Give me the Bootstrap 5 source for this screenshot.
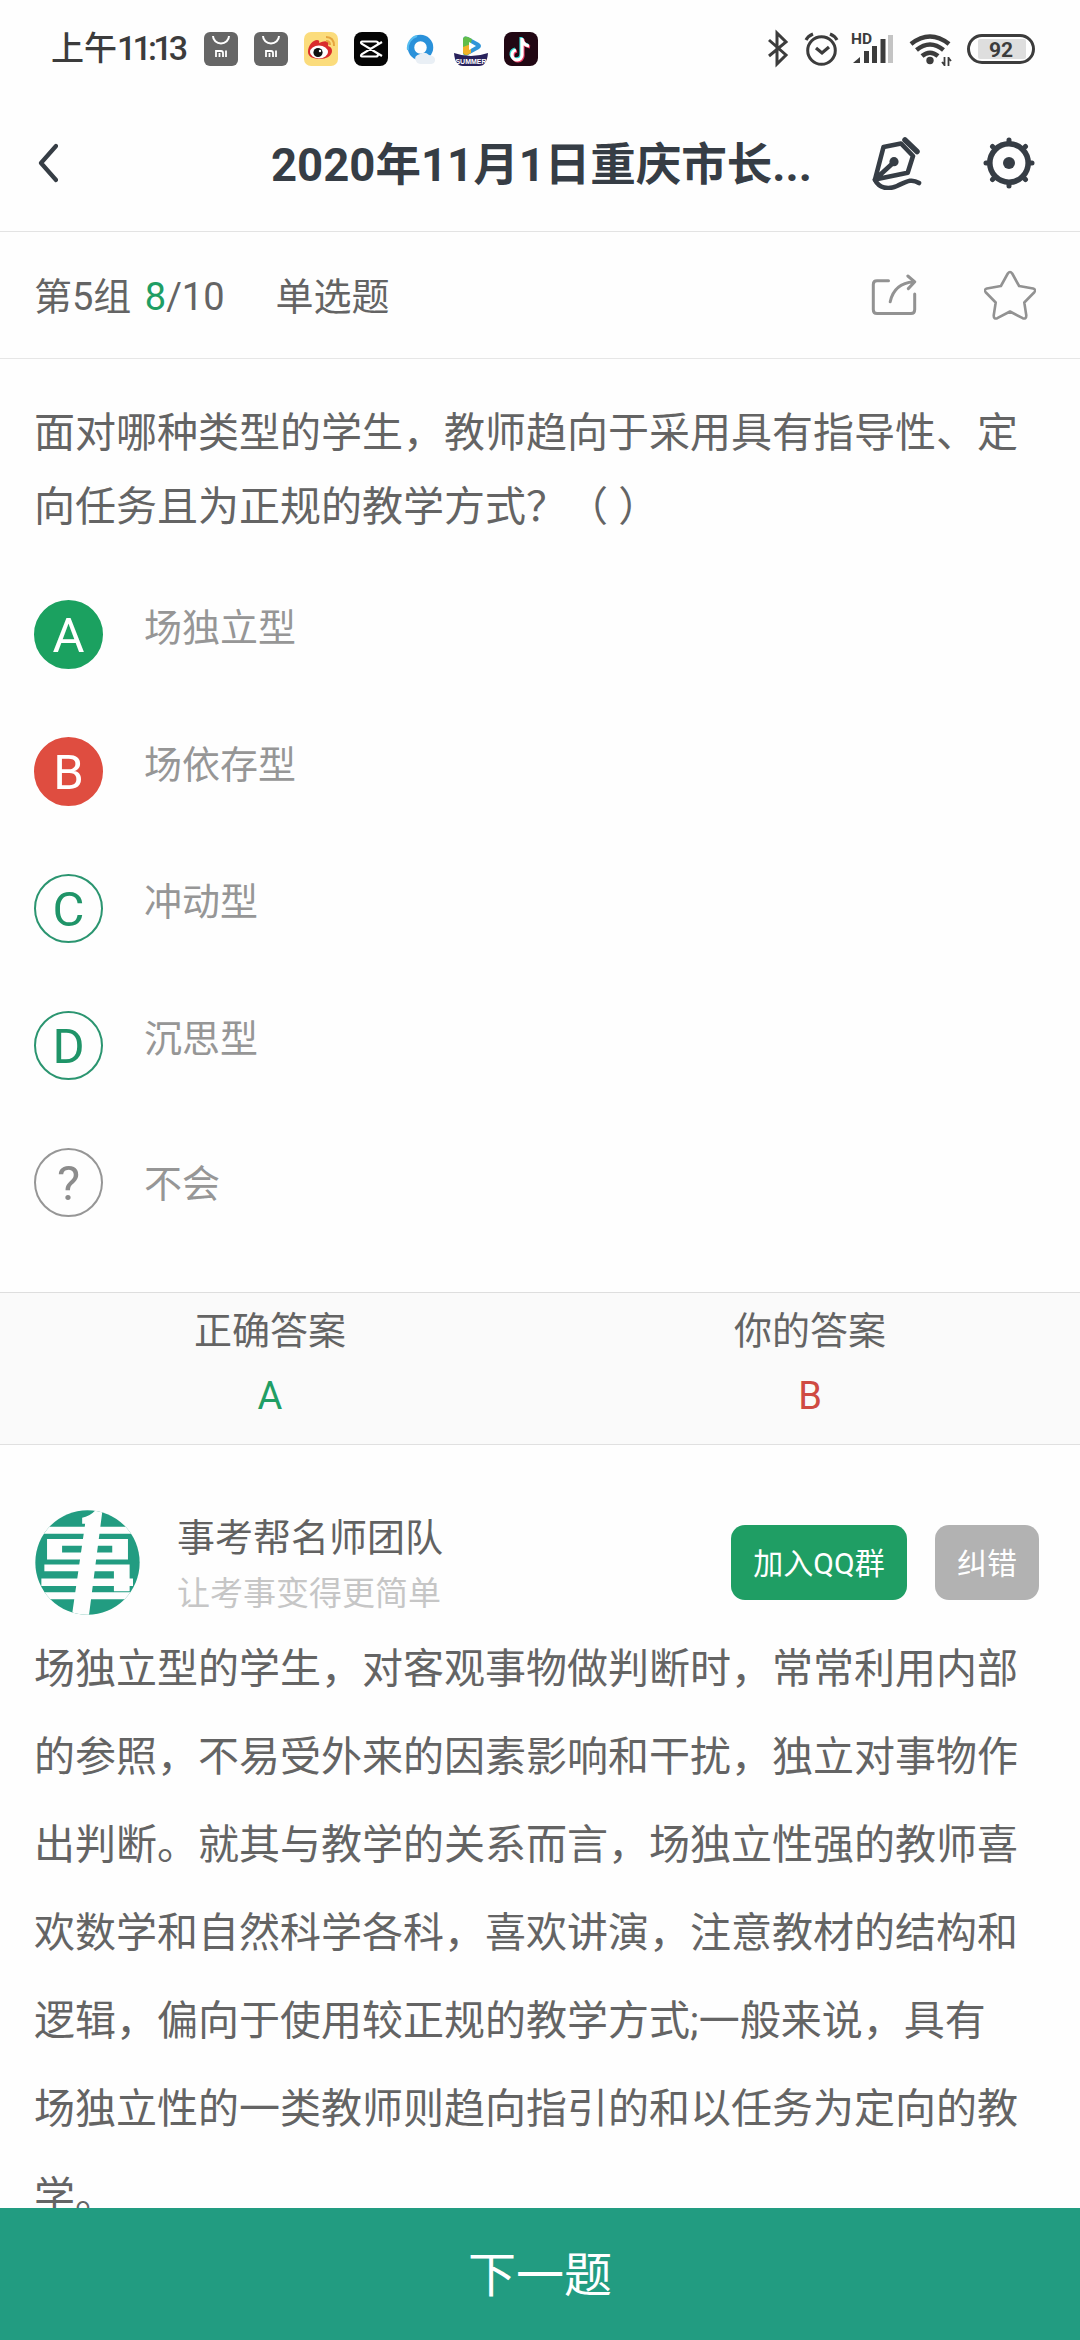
<!DOCTYPE html>
<html lang="zh-CN">
<head>
<meta charset="utf-8">
<meta name="viewport" content="width=device-width, initial-scale=1">
<title>单选题</title>
<link rel="stylesheet" href="https://cdn.jsdelivr.net/npm/bootstrap@5.3.0/dist/css/bootstrap.min.css">
<style>
body{font-family:Roboto,"Noto Sans CJK SC",sans-serif;color:#646464;background:#fefefe;width:1080px;height:2340px;font-size:38px;line-height:1.5;overflow:hidden;font-weight:400}
svg{display:block;flex:none}
.statusbar{height:97px;padding:0 44px 0 51px;color:#3c3c3c}
.clock{font-size:33px;font-weight:500;width:153px;white-space:nowrap}
.clock span{letter-spacing:-3.8px;font-size:34px}
.app-icons{gap:16px}
.titlebar{height:135px;padding:0 45px 3px 38px;border-bottom:1px solid #e3e3e3;color:#363d45}
.page-title{font-size:45.5px;font-weight:700;width:540px;margin-left:213px;white-space:nowrap;padding-top:7px}
.gear-icon{margin-left:61px}
.metabar{height:127px;padding:0 44px 0 34px;border-bottom:1px solid #e6e6e6;white-space:nowrap}
.meta-text{padding-top:5px}
.meta-count{margin-left:4px}
.meta-kind{margin-left:51px}
.star-icon{margin-left:65px}
.c-green{color:#1f9e64}
.c-red{color:#cf4a42}
.question{padding:37px 0 0 34px;font-size:41px;line-height:74px;height:241px;white-space:nowrap}
.choices{height:692px;padding-left:34px}
.choice{height:137px;gap:41px;color:#969696}
.choice span:last-child{line-height:56px}
.bullet{width:69px;height:69px;border:2px solid #2b9570;color:#1f9468;font-size:49px;line-height:67px;text-align:center;flex:none}
.bullet.right{background:#1ba160;border-color:#1ba160;color:#fff}
.bullet.wrong{background:#df4d40;border-color:#df4d40;color:#fff}
.bullet.unsure{border-color:#969696;color:#8c8c8c}
.answers{height:153px;border-top:1px solid #dedede;border-bottom:1px solid #e0e0e0;background:#fafafa;padding-top:6px}
.answers .col{line-height:65px}
.team{height:178px;padding:56px 41px 0 35px}
.team-name{margin-left:37px;line-height:56px;padding-top:7px;color:#626262;white-space:nowrap}
.team-sub{font-size:33px;color:#c6c6c6}
.pill{height:75px;border:0;border-radius:14px;font-size:30px;line-height:77px;padding:0;color:#fff;white-space:nowrap}
.pill-join{width:176px;background:#1f9e64}
.pill-fix{width:104px;background:#b2b2b2;margin-left:28px}
.explain{height:585px;overflow:hidden;padding:2px 0 0 34px;font-size:41px;line-height:88px;white-space:nowrap}
.next-btn{height:132px;border:0;border-radius:0;background:#229c81;color:#fff;font-size:48px;padding:10px 0 6px}
</style>
<script src="https://cdn.jsdelivr.net/npm/bootstrap@5.3.0/dist/js/bootstrap.bundle.min.js"></script>
</head>
<body class="d-flex flex-column m-0">
<div class="statusbar d-flex align-items-center flex-shrink-0">
  <div class="clock">上午<span>11:13</span></div>
  <div class="app-icons d-flex">
    <svg width="34" height="34" viewBox="0 0 34 34"><rect width="34" height="34" rx="6" fill="#666"/><path d="M9 4a8 7.5 0 0 0 16 0" fill="none" stroke="#fff" stroke-width="2"/><path d="M12 25v-6h5q2 0 2 2v4M15.500 25v-4M22 18.500V25" fill="none" stroke="#fff" stroke-width="1.800"/></svg>
    <svg width="34" height="34" viewBox="0 0 34 34"><rect width="34" height="34" rx="6" fill="#666"/><path d="M9 4a8 7.500 0 0 0 16 0" fill="none" stroke="#fff" stroke-width="2"/><path d="M12 25v-6h5q2 0 2 2v4M15.500 25v-4M22 18.500V25" fill="none" stroke="#fff" stroke-width="1.800"/></svg>
    <svg width="34" height="34" viewBox="0 0 34 34"><rect width="34" height="34" rx="7" fill="#fbdc7c"/><path d="M4 20C4 13 9 8 13 8q3 0 2 3 6-3 9-1 1 1 0 4 4 1 4 5c0 5-6 8-12 8S4 25 4 20z" fill="#d92b2c"/><ellipse cx="15" cy="20" rx="9" ry="6.500" fill="#fff"/><circle cx="14" cy="20.500" r="4.600" fill="#111"/><circle cx="16" cy="19" r="1.200" fill="#fff"/><path d="M22 5q8 0 8 9M22 9q4 0 4 4" fill="none" stroke="#e5a43e" stroke-width="2"/></svg>
    <svg width="34" height="34" viewBox="0 0 34 34"><rect width="34" height="34" rx="8" fill="#050505"/><path d="M28 10L8 22q-2 2 0 2.500h14q2 0 2-2M28 24L8 12q-2-2 0-2.500h14q2 0 2 2" fill="none" stroke="#fff" stroke-width="2.200"/></svg>
    <svg width="34" height="34" viewBox="0 0 34 34"><circle cx="16.500" cy="15.500" r="9.500" fill="none" stroke="#2a91da" stroke-width="6.500"/><path d="M4 18a12.500 12.500 0 0 1 9-14" fill="none" stroke="#56bdf0" stroke-width="2"/><path d="M12 29q-3-5 4-7 5-3 9 1 7 1 6 6-1 3-4 3H17q-4 0-5-3z" fill="#e9eff5"/></svg>
    <svg width="34" height="34" viewBox="0 0 34 34"><path d="M9 8q0-5 5-3l11 6q4 3 0 6l-11 6q-5 2-5-3z" fill="#3195d8"/><path d="M9 8q0-5 5-3l4 2-4 16q-5 1-5-3z" fill="#62bd49"/><path d="M9 15l8-3v9l-4 2q-4 0-4-3z" fill="#f3b229"/><path d="M15 10l7 4-7 4z" fill="#fff"/><path d="M0 21q17 6 34 0-1 13-9 13H9Q1 34 0 21z" fill="#28215b"/><text x="17" y="31.500" font-family="Liberation Sans,sans-serif" font-size="7" font-weight="700" fill="#fff" text-anchor="middle">SUMMER</text></svg>
    <svg width="34" height="34" viewBox="0 0 34 34"><rect width="34" height="34" rx="8" fill="#210713"/><g fill="none" stroke-width="3.200"><path d="M17 5v17a5 5 0 1 1-6-5M17 6q1 6 7 7" stroke="#34d9d4"/><path d="M19 7v17a5 5 0 1 1-6-5M19 8q1 6 7 7" stroke="#ee3d65"/><path d="M18 6v17a5 5 0 1 1-6-5M18 7q1 6 7 7" stroke="#fff"/></g></svg>
  </div>
  <svg class="ms-auto" width="272" height="40" viewBox="764 28 272 40" fill="none" stroke="#3c3c3c" stroke-width="3">
    <path d="M769 39l17 15-9 9V32l9 9-17 14" stroke-width="3"/>
    <circle cx="821.500" cy="49.500" r="13.800"/><path d="M816 47l6 5 7-6M806 39q2-4 7-6M830 33q5 2 7 6" stroke-width="3.200"/>
    <text x="851" y="43" stroke="none" fill="#3c3c3c" font-family="Roboto,sans-serif" font-weight="700" font-size="15.500">HD</text>
    <path d="M853 62l7-6v6z" fill="#3c3c3c" stroke="none"/><path d="M866.500 62V50M874.500 62V45M883 62V38" stroke-width="5"/><path d="M890.500 62V34" stroke="#c4c4c4" stroke-width="5"/>
    <path d="M911 43q19-15 38 0M916.500 49q13.500-11 27 0M922 55q8-6.500 16 0" stroke-width="4.600"/><circle cx="930" cy="59.500" r="3.700" fill="#3c3c3c" stroke="none"/><path d="M944.500 65v-9M942 61l2.500 3M948.500 56v9M951 60l-2.500-3" stroke-width="1.800"/>
    <rect x="978" y="38" width="48" height="20" rx="2" fill="#dedede" stroke="none"/><rect x="968.500" y="34.500" width="65" height="27" rx="13.500"/><text x="1001" y="55.500" text-anchor="middle" stroke="none" fill="#3c3c3c" font-family="Roboto,sans-serif" font-weight="700" font-size="21">92</text>
  </svg>
</div>
<header class="titlebar d-flex align-items-center flex-shrink-0">
  <svg width="20" height="40" viewBox="38 143 20 40" fill="none" stroke="currentColor" stroke-width="4.200" stroke-linecap="round" stroke-linejoin="round"><path d="M56 146L41 163l15 17"/></svg>
  <div class="page-title">2020年11月1日重庆市长...</div>
  <svg class="ms-auto" width="50" height="54" viewBox="871 136 50 54" fill="none" stroke="currentColor" stroke-width="4.600" stroke-linecap="round" stroke-linejoin="round"><path d="M904 140l12 11.500" stroke-width="5.500"/><path d="M874 179.500l8.500-32.500 17.500-3.500 12 12.500-5.300 16.700zL892 163"/><circle cx="893" cy="161.700" r="4.600" fill="currentColor" stroke="none"/><path d="M874 180c4 8 13 10 22 6s14-8 22-3"/></svg>
  <svg class="gear-icon" width="52" height="52" viewBox="982.500 137 52 52" fill="none" stroke="currentColor"><circle cx="1008.500" cy="163" r="19.200" stroke-width="5.600"/><circle cx="1008.500" cy="163" r="6" fill="currentColor" stroke="none"/><path d="M1008.500 140v3M1008.500 183v3M985.500 163h3M1028.500 163h3M992 146.500l2.500 2.500M1022.500 177l2.500 2.500M1025 146.500l-2.500 2.500M994.500 177l-2.500 2.500" stroke-width="5" stroke-linecap="round"/></svg>
</header>
<section class="metabar d-flex align-items-center flex-shrink-0">
  <div class="meta-text">第5组 <span class="c-green meta-count">8</span>/10</div>
  <div class="meta-text meta-kind">单选题</div>
  <svg class="ms-auto" width="48" height="50" viewBox="871 271 48 50" fill="none" stroke="#929292" stroke-width="3" stroke-linecap="round" stroke-linejoin="round"><path d="M888.500 281.700H877q-3.700 0-3.700 3.700v25q0 4 3.700 4h34q3.700 0 3.700-4V295M890.200 302.700q4-18.500 23.500-20M907.800 277l7 5.800-6.500 6.800"/></svg>
  <svg class="star-icon" width="52" height="50" viewBox="983.700 271 52 50" fill="none" stroke="#929292" stroke-width="2.600" stroke-linejoin="round"><path d="M1007.500 274.500q2.200-3 4.400 0l6.900 12.500 14 2.500q3.600 1.200 1 4l-9.800 10 2 13q0 4-3.600 2.700l-12.700-6.700-12.700 6.700q-3.600 1.300-3.600-2.700l2-13-9.800-10q-2.600-2.800 1-4l14-2.500z"/></svg>
</section>
<main class="flex-shrink-0">
  <div class="question">面对哪种类型的学生，教师趋向于采用具有指导性、定<br>向任务且为正规的教学方式？（ ）</div>
  <div class="choices">
    <div class="choice d-flex align-items-start"><span class="bullet right rounded-circle">A</span><span>场独立型</span></div>
    <div class="choice d-flex align-items-start"><span class="bullet wrong rounded-circle">B</span><span>场依存型</span></div>
    <div class="choice d-flex align-items-start"><span class="bullet rounded-circle">C</span><span>冲动型</span></div>
    <div class="choice d-flex align-items-start"><span class="bullet rounded-circle">D</span><span>沉思型</span></div>
    <div class="choice d-flex align-items-start"><span class="bullet unsure rounded-circle">?</span><span class="pt-2">不会</span></div>
  </div>
</main>
<section class="answers row g-0 text-center flex-shrink-0">
  <div class="col"><div>正确答案</div><div class="c-green">A</div></div>
  <div class="col"><div>你的答案</div><div class="c-red">B</div></div>
</section>
<section class="team d-flex align-items-center flex-shrink-0">
  <svg width="105" height="105" viewBox="29 29 314 314"><defs><clipPath id="disc"><circle cx="186" cy="186" r="156"/></clipPath></defs><g clip-path="url(#disc)"><path fill="#229c81" d="M29 29h314v314H29z"/><path fill="#fefefe" d="M29 79h314v21H29zM65 116h242v61H65zM57 192h255v20H57zM48 234h274v22H48zM265 192h47v80h-47zM29 275h314v21H29z"/><path fill="#229c81" d="M110 136h150v20H110z"/><path fill="#fefefe" d="M170 52q22-3 42-24h19l-41 319h-51l40-277h-9z"/></g></svg>
  <div class="team-name"><div>事考帮名师团队</div><div class="team-sub">让考事变得更简单</div></div>
  <button class="btn pill pill-join ms-auto">加入QQ群</button>
  <button class="btn pill pill-fix">纠错</button>
</section>
<article class="explain flex-shrink-0">场独立型的学生，对客观事物做判断时，常常利用内部<br>的参照，不易受外来的因素影响和干扰，独立对事物作<br>出判断。就其与教学的关系而言，场独立性强的教师喜<br>欢数学和自然科学各科，喜欢讲演，注意教材的结构和<br>逻辑，偏向于使用较正规的教学方式;一般来说，具有<br>场独立性的一类教师则趋向指引的和以任务为定向的教<br>学。</article>
<button class="btn next-btn w-100 flex-shrink-0">下一题</button>
</body>
</html>
